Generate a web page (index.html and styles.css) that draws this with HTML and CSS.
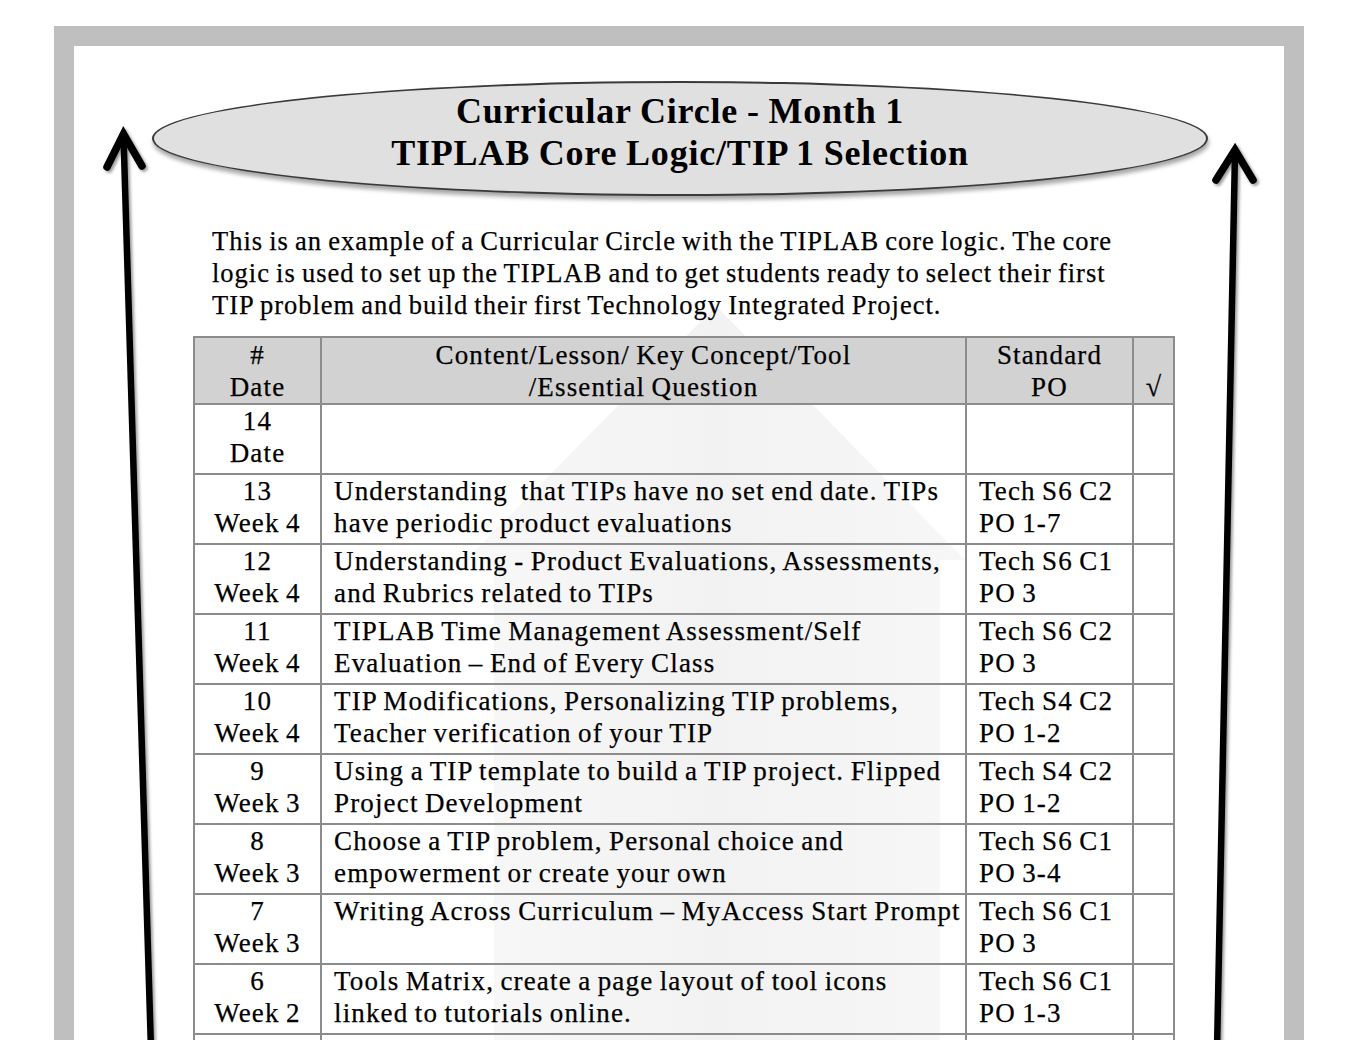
FILE: index.html
```html
<!DOCTYPE html>
<html lang="en">
<head>
<meta charset="utf-8">
<title>Curricular Circle - Month 1</title>
<link rel="stylesheet" href="styles.css">
</head>
<body>
<div class="frame">
  <svg class="watermark" viewBox="0 0 1360 1100" aria-hidden="true">
    <defs>
      <linearGradient id="wm" x1="0" y1="0" x2="1" y2="0">
        <stop offset="0" stop-color="#f8f8f8"/>
        <stop offset="0.5" stop-color="#f2f2f2"/>
        <stop offset="1" stop-color="#f7f7f7"/>
      </linearGradient>
    </defs>
    <polygon points="716,306 965,560 940,560 940,1100 494,1100 494,560 466,560" fill="url(#wm)"/>
  </svg>

  <div class="content">
    <div class="oval">
      <h1 class="title">Curricular Circle - Month 1<br>TIPLAB Core Logic/TIP 1 Selection</h1>
    </div>

    <p class="intro">This is an example of a Curricular Circle with the TIPLAB core logic. The core<br>logic is used to set up the TIPLAB and to get students ready to select their first<br>TIP problem and build their first Technology Integrated Project.</p>

    <table class="plan">
      <colgroup>
        <col class="c-date">
        <col class="c-content">
        <col class="c-std">
        <col class="c-check">
      </colgroup>
      <thead>
        <tr>
          <th>#<br>Date</th>
          <th>Content/Lesson/ Key Concept/Tool<br>/Essential Question</th>
          <th>Standard<br>PO</th>
          <th class="check">√</th>
        </tr>
      </thead>
      <tbody>
        <tr><td class="num">14<br>Date</td><td></td><td></td><td></td></tr>
        <tr><td class="num">13<br>Week 4</td><td>Understanding&nbsp; that TIPs have no set end date. TIPs<br>have periodic product evaluations</td><td>Tech S6 C2<br>PO 1-7</td><td></td></tr>
        <tr><td class="num">12<br>Week 4</td><td>Understanding - Product Evaluations, Assessments,<br>and Rubrics related to TIPs</td><td>Tech S6 C1<br>PO 3</td><td></td></tr>
        <tr><td class="num">11<br>Week 4</td><td>TIPLAB Time Management Assessment/Self<br>Evaluation – End of Every Class</td><td>Tech S6 C2<br>PO 3</td><td></td></tr>
        <tr><td class="num">10<br>Week 4</td><td>TIP Modifications, Personalizing TIP problems,<br>Teacher verification of your TIP</td><td>Tech S4 C2<br>PO 1-2</td><td></td></tr>
        <tr><td class="num">9<br>Week 3</td><td>Using a TIP template to build a TIP project. Flipped<br>Project Development</td><td>Tech S4 C2<br>PO 1-2</td><td></td></tr>
        <tr><td class="num">8<br>Week 3</td><td>Choose a TIP problem, Personal choice and<br>empowerment or create your own</td><td>Tech S6 C1<br>PO 3-4</td><td></td></tr>
        <tr><td class="num">7<br>Week 3</td><td>Writing Across Curriculum – MyAccess Start Prompt</td><td>Tech S6 C1<br>PO 3</td><td></td></tr>
        <tr><td class="num">6<br>Week 2</td><td>Tools Matrix, create a page layout of tool icons<br>linked to tutorials online.</td><td>Tech S6 C1<br>PO 1-3</td><td></td></tr>
        <tr><td class="num"></td><td></td><td></td><td></td></tr>
      </tbody>
    </table>
  </div>

  <svg class="arrows" viewBox="0 0 1360 1100" aria-hidden="true">
    <defs>
      <filter id="sh" x="-50%" y="-10%" width="200%" height="120%">
        <feDropShadow dx="2" dy="2" stdDeviation="1.8" flood-color="#000" flood-opacity="0.4"/>
      </filter>
    </defs>
    <g fill="none" stroke="#000" stroke-linecap="round" stroke-linejoin="miter" filter="url(#sh)">
      <line x1="152.5" y1="1100" x2="123.5" y2="136" stroke-width="6.5"/>
      <polyline points="107,167 123.5,134 142,166" stroke-width="7.5"/>
      <line x1="1216" y1="1100" x2="1235" y2="152" stroke-width="6.5"/>
      <polyline points="1216,180 1235,150 1253,180" stroke-width="7.5"/>
    </g>
  </svg>
</div>
</body>
</html>
```

FILE: styles.css
```css
html, body {
  margin: 0;
  padding: 0;
  background: #ffffff;
  overflow: hidden;
}

body {
  font-family: "Liberation Serif", "Times New Roman", serif;
  color: #000;
}

.frame {
  position: relative;
  box-sizing: content-box;
  width: 1210px;
  height: 1100px;
  margin: 26px 0 0 54px;
  border: 20px solid #bfbfbf;
  background: #fff;
}

.watermark {
  position: absolute;
  left: -74px;
  top: -46px;
  width: 1360px;
  height: 1100px;
  z-index: 0;
}

.arrows {
  position: absolute;
  left: -74px;
  top: -46px;
  width: 1360px;
  height: 1100px;
  z-index: 2;
  pointer-events: none;
}

.content {
  position: relative;
  z-index: 1;
  display: flex;
  flex-direction: column;
  align-items: flex-start;
  padding-top: 35px;
}

.oval {
  box-sizing: border-box;
  width: 1056px;
  height: 115px;
  margin-left: 78px;
  border: 2px solid #3a3a3a;
  border-radius: 50%;
  background: #e0e0e0;
  box-shadow: 1px 4px 4px rgba(0, 0, 0, 0.35);
  display: flex;
  align-items: center;
  justify-content: center;
  padding-bottom: 14px;
}

.title {
  margin: 0;
  font-size: 36px;
  line-height: 42px;
  font-weight: bold;
  letter-spacing: 0.8px;
  word-spacing: -1px;
  text-align: center;
  color: #000;
}

.intro {
  margin: 29px 0 0 138px;
  font-size: 26.5px;
  line-height: 32px;
  letter-spacing: 1px;
  word-spacing: -1.5px;
  white-space: nowrap;
  -webkit-text-stroke: 0.25px #000;
}

.plan {
  margin: 15px 0 0 119px;
  width: 980px;
  border-collapse: collapse;
  table-layout: fixed;
  font-size: 27px;
  line-height: 32px;
  letter-spacing: 1.15px;
  word-spacing: -1.5px;
  border: 2px solid #8c8c8c;
  -webkit-text-stroke: 0.25px #000;
}

.c-date { width: 127px; }
.c-content { width: 645px; }
.c-std { width: 167px; }
.c-check { width: 41px; }

.plan th,
.plan td {
  border: 2px solid #8c8c8c;
  padding: 0 0 4px 12px;
  vertical-align: top;
  text-align: left;
  white-space: nowrap;
  height: 64px;
}

.plan td.num {
  text-align: center;
  padding-left: 0;
}

.plan th {
  background: #d2d2d2;
  font-weight: normal;
  text-align: center;
  padding: 1px 0 0 0;
  height: 64px;
}

.plan th.check {
  vertical-align: bottom;
  font-size: 28px;
  letter-spacing: 0;
}
```
